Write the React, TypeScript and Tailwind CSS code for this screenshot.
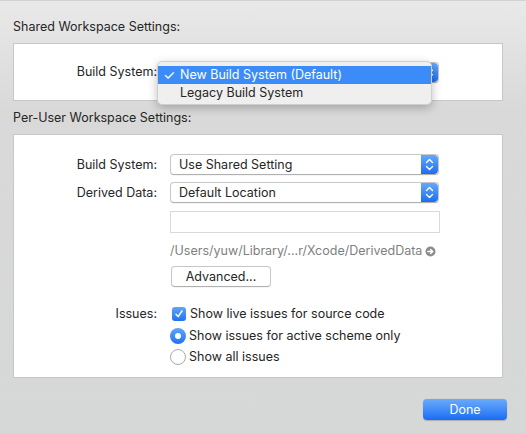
import React from "react";

const Stepper = () => (
  <div className="flex h-full w-[17px] shrink-0 items-center justify-center rounded-r-[4px] bg-linear-to-b from-[#64a8fa] to-[#1a6df3]">
    <svg width="17" height="21" viewBox="0 0 17 21" fill="none">
      <path d="M5.5 8.5 L8.5 5.5 L11.5 8.5" stroke="white" strokeWidth="1.4" strokeLinecap="round" strokeLinejoin="round" />
      <path d="M5.5 12.5 L8.5 15.5 L11.5 12.5" stroke="white" strokeWidth="1.4" strokeLinecap="round" strokeLinejoin="round" />
    </svg>
  </div>
);

const Select = ({ value }: { value: string }) => (
  <div className="flex h-[21px] w-[269px] items-stretch overflow-hidden rounded-[4px] border border-[#c6c6c6] border-b-[#b0b0b0] bg-white shadow-[0_0.5px_0.5px_rgba(0,0,0,0.08)]">
    <div className="flex flex-1 items-center pl-[8px] text-[12.5px] leading-[16px] text-[#262626]">{value}</div>
    <Stepper />
  </div>
);

export default function App() {
  return (
    <div
      className="relative flex h-[433px] w-[526px] flex-col overflow-hidden border-t border-[#d2d2d2] bg-linear-to-b from-[#e9e9e9] via-[#d9d9d9] via-25% to-[#d6d7d7] px-[13px] pt-[18px] text-[12.5px] text-[#262626]"
      style={{ fontFamily: "Inter, 'Liberation Sans', sans-serif" }}
    >
      <div className="leading-[16px]">Shared Workspace Settings:</div>
      <div className="mt-[8px] flex h-[58px] w-[490px] items-center border border-[#c7c7c7] bg-white">
        <div className="w-[143px] text-right leading-[16px]">Build System:</div>
        <div className="ml-[13px]">
          <Select value="" />
        </div>
      </div>

      <div className="mt-[9px] leading-[16px]">Per-User Workspace Settings:</div>
      <div className="mt-[8px] flex h-[244px] w-[490px] flex-col border border-[#c7c7c7] bg-white pt-[19px]">
        <div className="flex items-center">
          <div className="w-[143px] text-right leading-[16px]">Build System:</div>
          <div className="ml-[13px]">
            <Select value="Use Shared Setting" />
          </div>
        </div>
        <div className="mt-[7px] flex items-center">
          <div className="w-[143px] text-right leading-[16px]">Derived Data:</div>
          <div className="ml-[13px]">
            <Select value="Default Location" />
          </div>
        </div>
        <div className="ml-[156px] mt-[8px] h-[22px] w-[270px] border border-[#d9d9d9] bg-white" />
        <div className="ml-[156px] mt-[10px] flex w-[270px] items-center justify-between leading-[16px] text-[#7f7f7f]">
          <span>/Users/yuw/Library/...r/Xcode/DerivedData</span>
          <svg width="11" height="11" viewBox="0 0 11 11" className="mr-[4px] shrink-0">
            <circle cx="5.5" cy="5.5" r="5" fill="#8c8c8c" />
            <path d="M2.8 5.5 H7.6 M5.6 3.4 L7.8 5.5 L5.6 7.6" stroke="white" strokeWidth="1.4" fill="none" strokeLinecap="round" strokeLinejoin="round" />
          </svg>
        </div>
        <div className="ml-[157px] mt-[7px] flex h-[21px] w-[100px] items-center justify-center rounded-[4px] border border-[#c6c6c6] border-b-[#b0b0b0] bg-white leading-[16px] shadow-[0_0.5px_0.5px_rgba(0,0,0,0.08)]">
          Advanced...
        </div>
        <div className="mt-[19px] flex items-center">
          <div className="w-[143px] text-right leading-[16px]">Issues:</div>
          <div className="ml-[15px] flex items-center">
            <div className="flex h-[14px] w-[14px] items-center justify-center rounded-[3px] bg-linear-to-b from-[#5fa5fa] to-[#1f72f4]">
              <svg width="10" height="10" viewBox="0 0 10 10" fill="none">
                <path d="M2 5.3 L4.2 7.6 L8 1.8" stroke="white" strokeWidth="1.5" strokeLinecap="round" strokeLinejoin="round" />
              </svg>
            </div>
            <span className="ml-[4px] leading-[16px]">Show live issues for source code</span>
          </div>
        </div>
        <div className="ml-[156px] mt-[6px] flex items-center">
          <div className="flex h-[16px] w-[16px] items-center justify-center rounded-full bg-linear-to-b from-[#5fa5fa] to-[#1f72f4]">
            <div className="h-[6px] w-[6px] rounded-full bg-white" />
          </div>
          <span className="ml-[3px] leading-[16px]">Show issues for active scheme only</span>
        </div>
        <div className="ml-[156px] mt-[5px] flex items-center">
          <div className="h-[16px] w-[16px] rounded-full border border-[#ababab] bg-white" />
          <span className="ml-[3px] leading-[16px]">Show all issues</span>
        </div>
      </div>

      <div className="mr-[6px] mt-[21px] flex justify-end">
        <div className="flex h-[21px] w-[84px] items-center justify-center rounded-[4px] bg-linear-to-b from-[#69abfa] to-[#186cf4] leading-[16px] text-white shadow-[0_0.5px_1px_rgba(0,0,0,0.2)]">
          Done
        </div>
      </div>

      <div className="absolute left-[157px] top-[60px] h-[44px] w-[275px] rounded-[5px] border border-[#cfcfcf] bg-[#efefef] pt-[4px] shadow-[0_3px_10px_rgba(0,0,0,0.25)]">
        <div className="flex h-[18px] items-center bg-[#3b8cf8] leading-[16px] text-white">
          <span className="w-[22px] pl-[5px] text-[14px] leading-[16px]">✓</span>
          <span>New Build System (Default)</span>
        </div>
        <div className="flex h-[18px] items-center leading-[16px] text-[#262626]">
          <span className="w-[22px]" />
          <span>Legacy Build System</span>
        </div>
      </div>
    </div>
  );
}
